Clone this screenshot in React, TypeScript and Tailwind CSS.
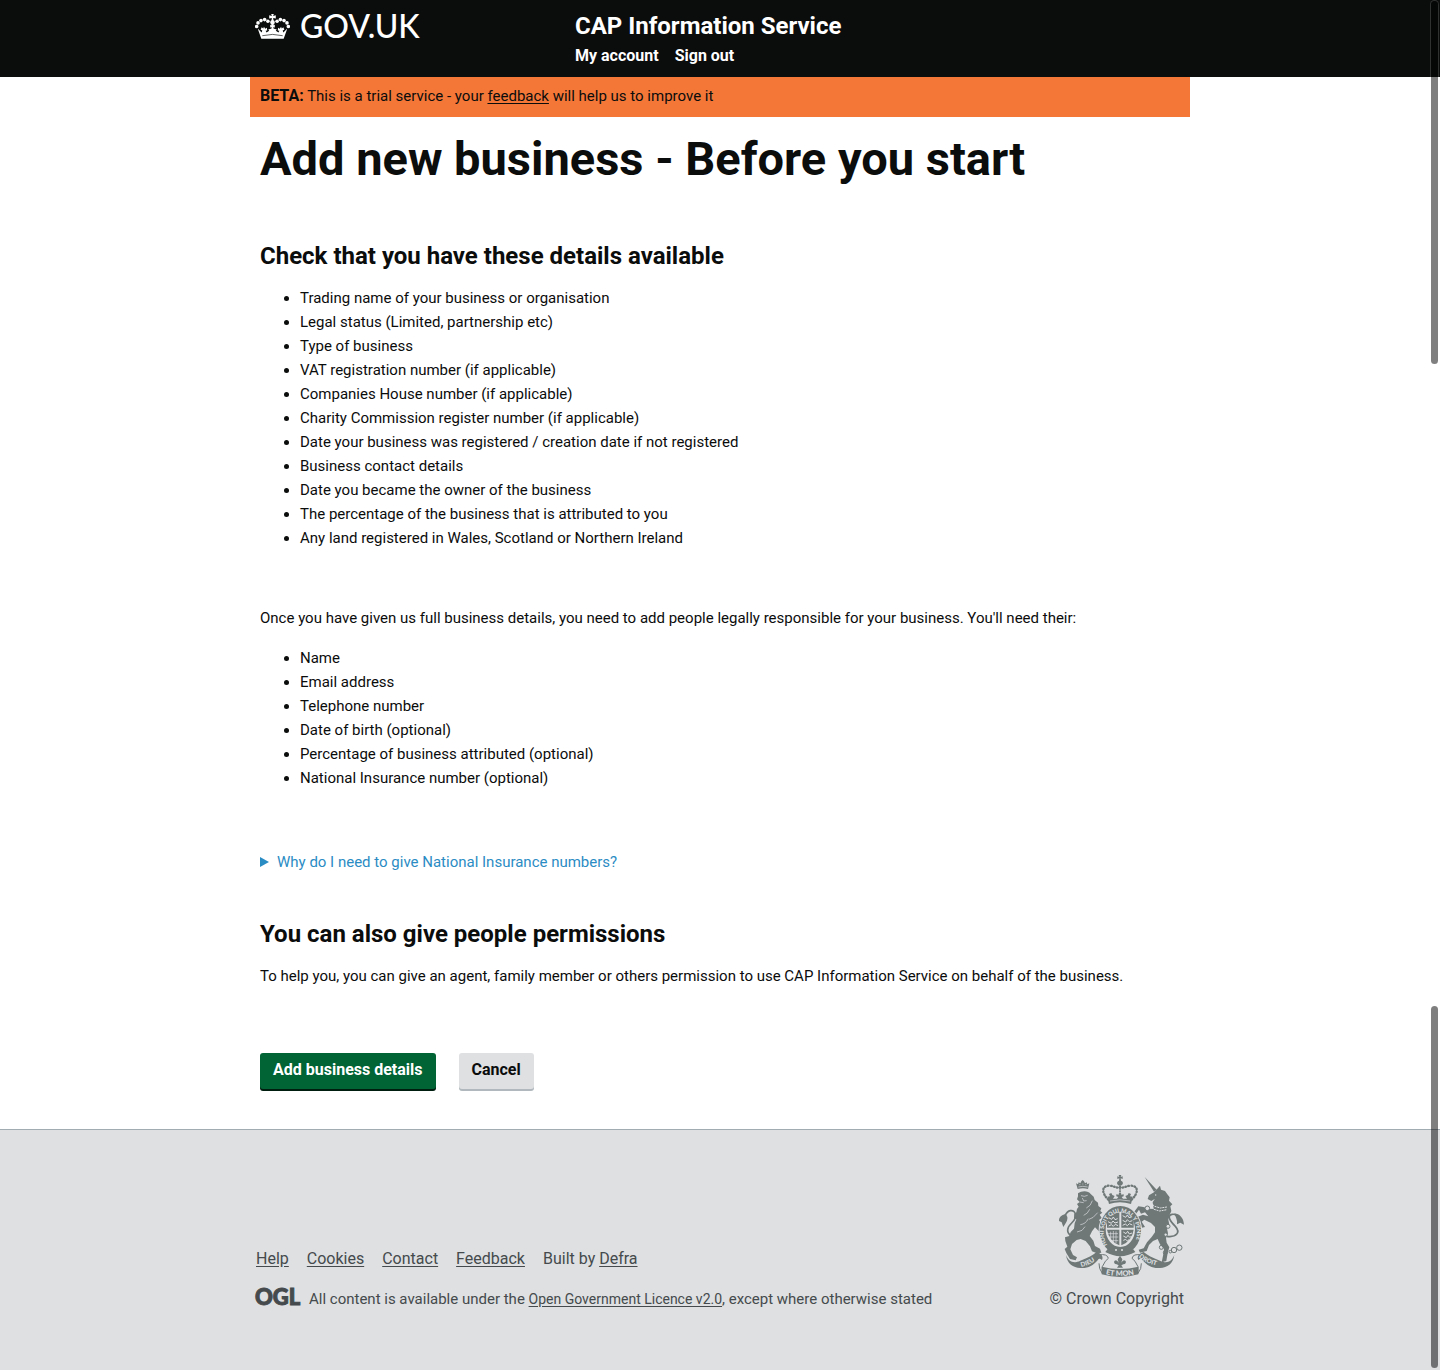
import React from "react";

const businessDetails = [
  "Trading name of your business or organisation",
  "Legal status (Limited, partnership etc)",
  "Type of business",
  "VAT registration number (if applicable)",
  "Companies House number (if applicable)",
  "Charity Commission register number (if applicable)",
  "Date your business was registered / creation date if not registered",
  "Business contact details",
  "Date you became the owner of the business",
  "The percentage of the business that is attributed to you",
  "Any land registered in Wales, Scotland or Northern Ireland",
];

const personDetails = [
  "Name",
  "Email address",
  "Telephone number",
  "Date of birth (optional)",
  "Percentage of business attributed (optional)",
  "National Insurance number (optional)",
];

const footerLinks = ["Help", "Cookies", "Contact", "Feedback"];

function CrownIcon() {
  const pearls: [number, number][] = [
    [5, 38], [9, 27], [18, 20], [29, 17], [39, 22],
    [101, 38], [97, 27], [88, 20], [77, 17], [67, 22],
  ];
  return (
    <svg viewBox="0 0 106 76" className="h-[25px] w-[35px] shrink-0" fill="#fff" aria-hidden="true">
      {pearls.map(([x, y]) => (
        <circle key={`${x}-${y}`} cx={x} cy={y} r="5.5" />
      ))}
      <path d="M49 0h8l-2 6 8-2v10l-8-2 1 7c4 2 5 6 3 10l-4 5 5-1v8l-5-1 4 12h-12l4-12-5 1v-8l5 1-4-5c-2-4-1-8 3-10l1-7-8 2V4l8 2z" />
      <path d="M8 44l12 12 2-6-5-2 3-8 5 4 2-5 4 6 5-3 1 8-5 1 3 5 8-5-3-4 8-2h10l8 2-3 4 8 5 3-5-5-1 1-8 5 3 4-6 2 5 5-4 3 8-5 2 2 6 12-12-11 31H19z" />
      <path d="M22 66q31-8 62 0" fill="none" stroke="#0b0c0c" strokeWidth="2" />
    </svg>
  );
}

function OglLogo() {
  return (
    <svg viewBox="0 0 43 24" className="h-6 w-[43px] shrink-0 overflow-visible" role="img" aria-label="Open Government Licence">
      <text x="-1" y="18" fill="#454a4c" stroke="#454a4c" strokeWidth="1" className="font-['Lato'] text-[22px] font-black">
        OGL
      </text>
    </svg>
  );
}

function RoyalArms() {
  const light = "#dee0e2";
  return (
    <svg viewBox="57 30 375 306" className="h-[102px] w-[125px]" fill="#6f7777" role="img" aria-label="Royal coat of arms">
      <defs>
        <path id="garter" d="M202 240A50 60 0 1 1 280 240" />
        <path id="motto-left" d="M124 306Q158 298 180 274" />
        <path id="motto-mid" d="M197 328Q240 338 290 327" />
        <path id="motto-right" d="M296 276Q320 298 364 304" />
      </defs>

      {/* Crown above the shield */}
      <g fill="none" stroke="#6f7777">
        <path d="M205 104C184 84 184 62 208 62c14 0 24 10 32 4 8 6 18-4 32-4 24 0 24 22 3 42" strokeWidth="7" strokeLinecap="round" strokeDasharray="2 7" />
        <path d="M240 62v44" strokeWidth="5" strokeDasharray="5 2" />
      </g>
      <path d="M236 30h8l-2 6 6-2v8l-6-2 1 7c8 3 8 13-3 15-11-2-11-12-3-15l1-7-6 2v-8l6 2z" />
      <path d="M204 105l-2-10 8-1-3-7 7-3 3 6 7 3-5 8h12l4-5-6-2v-6l7 1 1-6h6l1 6 7-1v6l-6 2 4 5h12l-5-8 7-3 3-6 7 3-3 7 8 1-2 10-3 12q-33-10-66 0z" />
      <path d="M210 108q30-7 60 0" fill="none" stroke={light} strokeWidth="2" />

      {/* Lion */}
      <path d="M113 72l-5-17 6 3 2-6 5 3 3-6 4-4 4 4 3 6 5-3 2 6 6-3-4 17q-15-5-31 0z" />
      <path d="M115 66q13-4 28 0M118 59h3M127 57h3M136 59h3" fill="none" stroke={light} strokeWidth="2" />
      <g transform="translate(45 15)">
        <path d="M69 70C80 61 100 61 107 72l9 8 3 10 10 8 1 10 9 7-3 8 6 5-8 6 6 10-8 6 8 12 5 18-11 6-14-14-9 12-7 14 11 14 5 16 15 8 4 12-13 2-15-6-6-15-13-16-15-6-12 3-14 12-5 16 8 17 12 7-4 9-17-4-11-18-5-12 8-7-6-17-1-11 13-4 4-12 10-10 2-16 5-12-7-3 1-12 6-6 2-10 5-7-5-8 8-6-8-8 3-9z" />
        <path d="M78 77l10 2 10-3M82 84l4 9 9-1M74 96l12 2M112 92q-4 16-18 22M104 118q-6 14-18 18M128 128q-14 18-26 20M76 164q16-2 24-18M66 186q18-2 24-16" fill="none" stroke={light} strokeWidth="2" />
      </g>
      <path d="M95 214C78 202 80 188 95 174c18-17 13-40-4-37-12 2-14 12-18 20" fill="none" stroke="#6f7777" strokeWidth="5" />
      <path d="M78 148c-12 0-22 9-21 20l8 4 5 14c5-10 14-18 12-30z" />

      {/* Unicorn */}
      <path d="M314 36l36 38-8 6z" />
      <g transform="translate(240 15)">
        <path d="M103 65l9-9 8-9 3 12 12 4 7 10 7 9-2 10 10 11-6 6 3 14-5 12-4 14 3 15-7 12 3 14-6 14 2 14 8 14-5 17-4 24-14 4 5-24 2-16-12-14-7-16-14 6-12 12-7 18-20 5-4-9 15-4 10-18 14-16 10-14v-16l-12-12-20-10-8 6 10 16-9 2-12-18-2-14 17-7 16 5-10-12-12 4-6-12-10 14-7-4 15-20 15 2 18 6 13-1-3-19 6-10-10 6-11-6 4-11 15-9z" />
        <path d="M92 98l12 11 17 5 20-3M90 107l12 11 17 5 22-4" fill="none" stroke={light} strokeWidth="3" strokeDasharray="6 2" />
        <circle cx="107" cy="75" r="2" fill={light} />
      </g>
      <path d="M380 214c30 4 42-12 26-30-16-16-26-32-10-36 12-2 16 6 20 14" fill="none" stroke="#6f7777" strokeWidth="5" />
      <path d="M403 145c16 2 28 14 29 34l-11-6-10 5c2-12-4-22-8-33z" />

      {/* Chain */}
      <g fill="none" stroke="#6f7777" strokeWidth="3">
        <circle cx="364" cy="247" r="6" />
        <circle cx="376" cy="263" r="6" />
        <circle cx="391" cy="260" r="4" />
        <circle cx="402" cy="255" r="8" />
        <circle cx="418" cy="248" r="8" />
        <circle cx="384" cy="184" r="6" fill={light} />
        <circle cx="377" cy="209" r="5" fill={light} />
        <circle cx="322" cy="130" r="7" fill={light} />
      </g>

      {/* Garter and shield */}
      <ellipse cx="241" cy="196" rx="65" ry="76" fill={light} />
      <ellipse cx="241" cy="196" rx="62" ry="73" />
      <ellipse cx="241" cy="193" rx="44" ry="53" fill={light} />
      <path d="M201 188v-20q8-23 37-26v46zM244 188v-46q29 3 37 26v20zM201 194h37v47q-31-13-37-47zM244 194h37q-5 34-37 47z" />
      <g fill="none" stroke={light} strokeWidth="3">
        <path d="M206 158l9 5 5-7 5 8 8-3M204 170l10 5 5-7 6 6 9-3M206 183l8-4 6 5 6-6 8 4" />
        <path d="M248 152l9 5 5-7 5 8 7-2M248 166l9 5 5-7 6 6 9-3M248 181l8-4 6 5 6-6 9 4" />
        <path d="M212 200v22M220 198v34M228 199v36M204 206h30M207 216h28M213 227h22" strokeWidth="2" />
        <path d="M250 201l8 5 5-7 5 8 8-3M250 213l9 5 5-7 5 6 6-3M250 226l7-3 5 5 6-5" />
      </g>
      <text fill={light} className="font-['Lato'] text-[17px] font-black">
        <textPath href="#garter">HONI SOIT QUI MAL Y PENSE</textPath>
      </text>
      <path d="M203 252q38 24 76 0l7 9q-45 25-90 0z" />
      <circle cx="228" cy="255" r="3" fill={light} />
      <circle cx="246" cy="255" r="3" fill={light} />

      {/* Motto ribbon */}
      <path d="M78 270c9 22 24 26 43 17 23-8 38-17 49-26 12 4 22 13 16 24-8-7-11-4-13 1-14 17-31 25-52 23-22-1-39-12-43-39z" />
      <path d="M403 270c-9 22-24 26-43 17-23-8-38-17-49-26-12 4-22 13-16 24 8-7 11-4 13 1 14 17 31 25 52 23 22-1 39-12 43-39z" />
      <path d="M185 305q55 14 110 0v23q-55 16-110 0z" />
      <path d="M176 270q26-5 29 10-9 5-18 25v20q-11-14-10-30M305 270q-26-5-29 10 9 5 18 25v20q11-14 10-30" fill="none" stroke="#6f7777" strokeWidth="3" />
      <path d="M240 272l7 11-3 10q6-12 13-5 3 9-7 10l-6 3 5 7h-18l5-7-6-3q-10-1-7-10 7-7 13 5l-3-10z" />
      <g fill={light} className="font-['Lato'] text-[19px] font-black">
        <text><textPath href="#motto-left">DIEU</textPath></text>
        <text className="text-[22px]"><textPath href="#motto-mid">ET MON</textPath></text>
        <text><textPath href="#motto-right">DROIT</textPath></text>
      </g>
    </svg>
  );
}

function BulletList({ items, className }: { items: string[]; className: string }) {
  return (
    <ul className={`list-disc pl-10 leading-6 ${className}`}>
      {items.map((item) => (
        <li key={item}>{item}</li>
      ))}
    </ul>
  );
}

export default function App() {
  return (
    <div className="relative flex min-h-screen flex-col bg-white font-['Roboto',sans-serif] text-[15px] text-[#0b0c0c]">
      <header className="bg-[#0b0c0c] text-white">
        <div className="mx-auto flex max-w-[940px] px-[5px] pt-[11px] pb-2.5">
          <a href="#home" className="flex w-80 items-start gap-2.5" aria-label="GOV.UK">
            <span className="pt-[3px]">
              <CrownIcon />
            </span>
            <span className="font-['Lato',sans-serif] text-[32px] leading-[30px] font-medium">GOV.UK</span>
          </a>
          <div>
            <div className="text-2xl leading-[30px] font-bold">CAP Information Service</div>
            <nav className="mt-1 flex gap-4 text-base leading-[22px] font-bold">
              <a href="#account">My account</a>
              <a href="#sign-out">Sign out</a>
            </nav>
          </div>
        </div>
      </header>

      <main className="mx-auto w-full max-w-[940px] flex-1 pb-10">
        <div className="bg-[#f47738] px-2.5 pt-[7px] pb-[9px] leading-6">
          <strong className="text-base leading-6">BETA:</strong> This is a trial service - your{" "}
          <a href="#feedback" className="underline underline-offset-2">feedback</a> will help us to improve it
        </div>

        <div className="px-2.5">
          <h1 className="mt-4 text-[47px] leading-[52px] font-bold">Add new business - Before you start</h1>

          <h2 className="mt-14 text-2xl leading-[30px] font-bold">Check that you have these details available</h2>
          <BulletList items={businessDetails} className="mt-[15px]" />

          <p className="mt-14 leading-6">
            Once you have given us full business details, you need to add people legally responsible for your business.
            You'll need their:
          </p>
          <BulletList items={personDetails} className="mt-4" />

          <details className="mt-[60px] leading-6">
            <summary className="flex cursor-pointer list-none items-center gap-2 text-[#2b8cc4]">
              <svg viewBox="0 0 9 10" className="h-2.5 w-[9px]" fill="currentColor" aria-hidden="true">
                <path d="M0 0l9 5-9 5z" />
              </svg>
              Why do I need to give National Insurance numbers?
            </summary>
          </details>

          <h2 className="mt-[45px] text-2xl leading-[30px] font-bold">You can also give people permissions</h2>
          <p className="mt-[15px] leading-6">
            To help you, you can give an agent, family member or others permission to use CAP Information Service on
            behalf of the business.
          </p>

          <div className="mt-[65px] flex gap-[23px] text-base font-bold">
            <button type="button" className="h-9 rounded-[3px] bg-[#006435] px-[13px] pb-0.5 text-white shadow-[0_2px_0_#001e10]">
              Add business details
            </button>
            <button type="button" className="h-9 rounded-[3px] bg-[#dee0e2] px-[13px] pb-0.5 shadow-[0_2px_0_#b1b9be]">
              Cancel
            </button>
          </div>
        </div>
      </main>

      <footer className="border-t border-[#a1acb2] bg-[#dee0e2] text-base leading-6 text-[#454a4c]">
        <div className="mx-auto flex max-w-[940px] items-end justify-between px-1.5 pt-[45px] pb-[59px]">
          <div>
            <nav className="flex gap-[18px]">
              {footerLinks.map((label) => (
                <a key={label} href={`#${label.toLowerCase()}`} className="underline underline-offset-2">
                  {label}
                </a>
              ))}
              <span>
                Built by <a href="#defra" className="underline underline-offset-2">Defra</a>
              </span>
            </nav>
            <div className="mt-4 flex gap-2.5">
              <OglLogo />
              <p className="text-[15px] leading-6">
                All content is available under the{" "}
                <a href="#licence" className="text-sm underline underline-offset-2">Open Government Licence v2.0</a>, except
                where otherwise stated
              </p>
            </div>
          </div>
          <div className="flex flex-col items-end">
            <RoyalArms />
            <a href="#copyright" className="mt-2.5">© Crown Copyright</a>
          </div>
        </div>
      </footer>

      <div className="pointer-events-none absolute top-px right-0.5 h-[363px] w-[7px] rounded-full bg-black/50 shadow-[0_0_0_1px_rgba(255,255,255,0.15)]" />
      <div className="pointer-events-none absolute right-0.5 bottom-0.5 h-[362px] w-[7px] rounded-full bg-black/50" />
    </div>
  );
}
